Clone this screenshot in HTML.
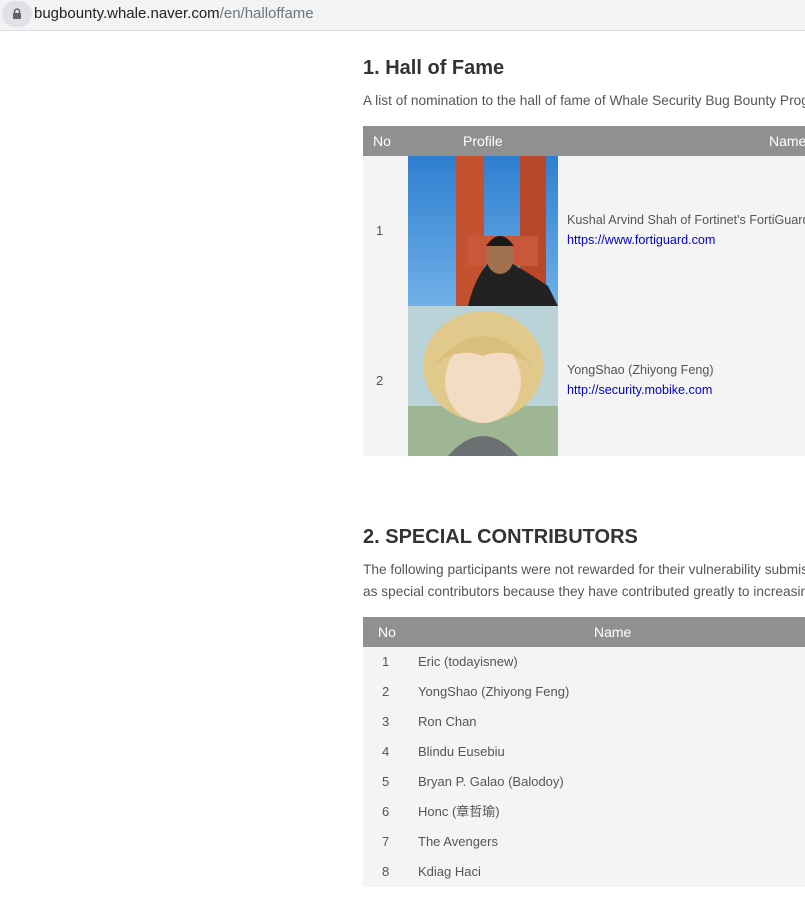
<!DOCTYPE html>
<html><head><meta charset="utf-8"><style>
*{margin:0;padding:0;box-sizing:border-box}
html,body{width:805px;height:905px;overflow:hidden}
body{background:#fff;font-family:"Liberation Sans","Noto Sans CJK SC",sans-serif;position:relative;color:#555}
.a{position:absolute;white-space:nowrap}
.bar{position:absolute;left:0;top:0;width:805px;height:31px;background:#f1f3f4;border-bottom:1px solid #dadce0}
.lk{position:absolute;left:2px;top:1px;width:30px;height:26px;border-radius:13px;background:#dfe1e5}
h2{font-size:20px;color:#333;font-weight:bold}
.hd{position:absolute;left:363px;width:442px;height:30px;background:#909090;color:#fff;font-size:14px;overflow:hidden}
.bg{position:absolute;left:363px;width:442px;background:#f4f4f4}
.t{font-size:13px;color:#555}
a{color:#0000cc;text-decoration:none}
</style></head><body>
<div class="bar"><div class="lk"><svg style="position:absolute;left:10px;top:7px" width="10" height="12" viewBox="0 0 10 12"><path d="M2.5 5V3.5a2.5 2.5 0 0 1 5 0V5" stroke="#5f6368" stroke-width="1.5" fill="none"/><rect x="1" y="5" width="8" height="6" rx="1" fill="#5f6368"/></svg></div>
<div class="a" style="left:34px;top:5px;font-size:15px;color:#202124">bugbounty.whale.naver.com<span style="color:#70757a">/en/halloffame</span></div></div>

<h2 class="a" style="left:363px;top:57px">1. Hall of Fame</h2>
<div class="a t" style="left:363px;top:93px;font-size:13.7px">A list of nomination to the hall of fame of Whale Security Bug Bounty Program</div>
<div class="hd" style="top:126px"><span class="a" style="left:10px;top:7px">No</span><span class="a" style="left:100px;top:7px">Profile</span><span class="a" style="left:406px;top:7px">Name</span></div>
<div class="bg" style="top:156px;height:300px"></div>
<svg class="a" style="left:408px;top:156px" width="150" height="150"><defs><linearGradient id="s" x1="0" y1="0" x2="0" y2="1"><stop offset="0" stop-color="#2f7fd0"/><stop offset="1" stop-color="#6fb0e8"/></linearGradient></defs><rect width="150" height="150" fill="url(#s)"/><rect x="48" y="0" width="28" height="150" fill="#c4512f"/><rect x="112" y="0" width="26" height="150" fill="#b9482a"/><rect x="60" y="80" width="70" height="30" fill="#c9583a"/><path d="M60 150 Q70 110 90 100 Q110 110 140 130 L150 150Z" fill="#222"/><ellipse cx="92" cy="100" rx="14" ry="18" fill="#a0704f"/><path d="M78 90 Q92 70 106 90" fill="#1a1a1a"/></svg>
<svg class="a" style="left:408px;top:306px" width="150" height="150"><rect width="150" height="150" fill="#b9d3d8"/><rect y="100" width="150" height="50" fill="#9fb694"/><ellipse cx="75" cy="60" rx="60" ry="55" fill="#e0c98a"/><ellipse cx="75" cy="75" rx="38" ry="42" fill="#f2dcc3"/><path d="M25 60 Q75 0 125 60 Q100 40 75 50 Q50 40 25 60Z" fill="#d9bf7b"/><path d="M40 150 Q75 110 110 150Z" fill="#6d7073"/></svg>
<div class="a t" style="left:376px;top:223px">1</div>
<div class="a t" style="left:567px;top:213px;font-size:12.6px">Kushal Arvind Shah of Fortinet's FortiGuard Labs</div>
<div class="a t" style="left:567px;top:233px;font-size:12.6px"><a>https://www.fortiguard.com</a></div>
<div class="a t" style="left:376px;top:373px">2</div>
<div class="a t" style="left:567px;top:363px;font-size:12.6px">YongShao (Zhiyong Feng)</div>
<div class="a t" style="left:567px;top:383px;font-size:12.6px"><a>http://security.mobike.com</a></div>

<h2 class="a" style="left:363px;top:526px">2. SPECIAL CONTRIBUTORS</h2>
<div class="a t" style="left:363px;top:562px;font-size:13.7px">The following participants were not rewarded for their vulnerability submissions, but are listed</div>
<div class="a t" style="left:363px;top:584px;font-size:13.7px">as special contributors because they have contributed greatly to increasing the security of Whale.</div>
<div class="hd" style="top:617px"><span class="a" style="left:15px;top:7px">No</span><span class="a" style="left:231px;top:7px">Name</span></div>
<div class="bg" style="top:647px;height:240px"></div>
<div class="a t" style="left:382px;top:647px;line-height:30px">1<br>2<br>3<br>4<br>5<br>6<br>7<br>8</div>
<div class="a t" style="left:418px;top:647px;line-height:30px">Eric (todayisnew)<br>YongShao (Zhiyong Feng)<br>Ron Chan<br>Blindu Eusebiu<br>Bryan P. Galao (Balodoy)<br>Honc (章哲瑜)<br>The Avengers<br>Kdiag Haci</div>
</body></html>
